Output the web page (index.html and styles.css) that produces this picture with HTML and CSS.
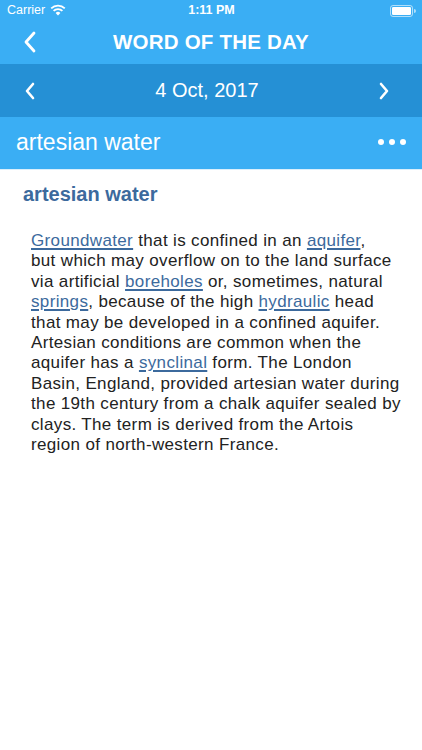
FILE: index.html
```html
<!DOCTYPE html>
<html>
<head>
<meta charset="utf-8">
<link rel="stylesheet" href="styles.css">
</head>
<body>
<div class="top">
  <div class="status">
    <div class="st-left">Carrier
      <svg class="wifi" width="16" height="12" viewBox="0 0 16 12"><path d="M8 11.5 L5.6 8.9 A3.4 3.4 0 0 1 10.4 8.9 Z" fill="#fff"/><path d="M3.6 6.9 A6.2 6.2 0 0 1 12.4 6.9" stroke="#fff" stroke-width="1.8" fill="none"/><path d="M1.2 4.4 A9.6 9.6 0 0 1 14.8 4.4" stroke="#fff" stroke-width="1.8" fill="none"/></svg>
    </div>
    <div class="st-time">1:11 PM</div>
    <div class="st-right">
      <svg width="26" height="12" viewBox="0 0 26 12"><rect x="0.5" y="0.5" width="22" height="11" rx="2.5" fill="none" stroke="#fff" stroke-opacity="0.6"/><rect x="2" y="2" width="19" height="8" rx="1.3" fill="#fff"/><path d="M24 4 a2 2 0 0 1 0 4 z" fill="#fff" fill-opacity="0.6"/></svg>
    </div>
  </div>
  <div class="nav">
    <svg class="nav-back" width="14" height="22" viewBox="0 0 14 22"><path d="M11 2 L3 11 L11 20" stroke="#fff" stroke-width="2.8" fill="none" stroke-linecap="round" stroke-linejoin="round"/></svg>
    <div class="nav-title">WORD OF THE DAY</div>
  </div>
</div>
<div class="datebar">
  <svg class="chev" width="14" height="22" viewBox="0 0 14 22"><path d="M10 4 L4 11 L10 18" stroke="#fff" stroke-width="2.6" fill="none" stroke-linecap="round" stroke-linejoin="round"/></svg>
  <div class="date">4 Oct, 2017</div>
  <svg class="chev" width="14" height="22" viewBox="0 0 14 22"><path d="M4 4 L10 11 L4 18" stroke="#fff" stroke-width="2.6" fill="none" stroke-linecap="round" stroke-linejoin="round"/></svg>
</div>
<div class="wordbar">
  <div class="word">artesian water</div>
  <div class="dots"><span></span><span></span><span></span></div>
</div>
<div class="content">
  <h1 class="head">artesian water</h1>
  <p class="def"><a>Groundwater</a> that is confined in an <a>aquifer</a>,<br>but which may overflow on to the land surface<br>via artificial <a>boreholes</a> or, sometimes, natural<br><a>springs</a>, because of the high <a>hydraulic</a> head<br>that may be developed in a confined aquifer.<br>Artesian conditions are common when the<br>aquifer has a <a>synclinal</a> form. The London<br>Basin, England, provided artesian water during<br>the 19th century from a chalk aquifer sealed by<br>clays. The term is derived from the Artois<br>region of north-western France.</p>
</div>
</body>
</html>
```
FILE: styles.css
```css
* { box-sizing: border-box; }
html, body { margin: 0; padding: 0; }
body {
  width: 422px;
  height: 750px;
  background: #fff;
  font-family: "Liberation Sans", Arial, sans-serif;
  overflow: hidden;
}
.top { background: #3aaef4; color: #fff; }
.status {
  height: 20px;
  display: flex;
  align-items: center;
  justify-content: space-between;
  padding: 0 6px 0 7px;
  font-size: 12.5px;
}
.st-left { display: flex; align-items: center; gap: 5px; width: 90px; }
.wifi { margin-top: -1px; }
.st-time { font-weight: bold; font-size: 12.5px; }
.st-right { width: 90px; display: flex; justify-content: flex-end; padding-top: 1px; }
.nav {
  height: 44px;
  display: flex;
  align-items: center;
  justify-content: center;
  position: relative;
}
.nav-back { position: absolute; left: 23px; top: 11px; }
.nav-title { font-size: 20.5px; font-weight: bold; letter-spacing: 0.2px; }
.datebar {
  background: #2590d5;
  height: 53px;
  display: flex;
  align-items: center;
  justify-content: space-between;
  padding: 0 31px 0 23px;
  color: #fff;
}
.date { font-size: 20px; }
.wordbar {
  background: #3aaef4;
  height: 53px;
  display: flex;
  align-items: center;
  justify-content: space-between;
  padding: 0 16px 2px 16px;
  color: #fff;
  border-bottom: 1px solid #d9effc;
}
.word { font-size: 23px; }
.dots { display: flex; gap: 5px; }
.dots span { width: 6px; height: 6px; border-radius: 50%; background: #fff; display: block; }
.content { padding: 12px 10px 0 23px; }
.head {
  margin: 0;
  font-size: 20px;
  font-weight: bold;
  color: #3c6a9d;
  line-height: 24px;
}
.def {
  margin: 25px 0 0 8px;
  font-size: 17px;
  line-height: 20.4px;
  letter-spacing: 0.35px;
  color: #222;
  white-space: nowrap;
}
.def a { color: #3c6a9d; text-decoration: underline; text-decoration-thickness: 1.5px; text-underline-offset: 2px; }
```
